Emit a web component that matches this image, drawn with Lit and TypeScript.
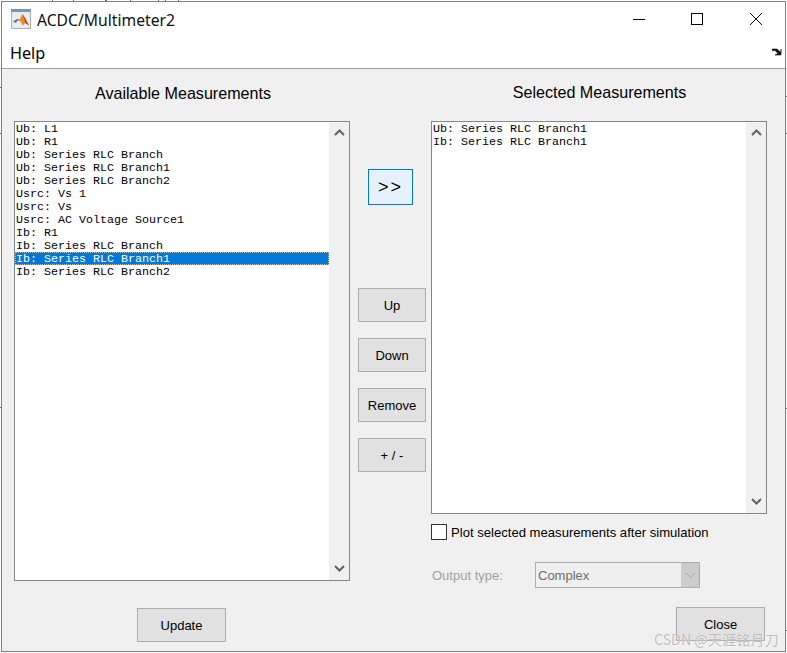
import { LitElement, html, css } from "lit";
import { customElement } from "lit/decorators.js";

const LEFT = ["Ub: L1","Ub: R1","Ub: Series RLC Branch","Ub: Series RLC Branch1","Ub: Series RLC Branch2","Usrc: Vs 1","Usrc: Vs","Usrc: AC Voltage Source1","Ib: R1","Ib: Series RLC Branch","Ib: Series RLC Branch1","Ib: Series RLC Branch2"];
const RIGHT = ["Ub: Series RLC Branch1","Ib: Series RLC Branch1"];
const SELECTED = 10;
/* Slivers of whatever lies behind the window, visible in the 1px margin round it. */
const BEHIND: [number, number][] = [[52,0],[73,0],[105,0],[106,0],[130,0],[158,0],[165,0],[178,0],[0,87],[0,133],[0,407],[786,96],[786,133],[786,408],[786,630]];

const chevron = (up: boolean) => html`<svg class="chev" width="11" height="7" viewBox="0 0 11 7"><path d=${up ? "M1 6L5.5 1.5L10 6" : "M1 1L5.5 5.5L10 1"} fill="none" stroke="#606060" stroke-width="2"/></svg>`;

@customElement("app-root")
export class AppRoot extends LitElement {
  static styles = css`
    :host { display: block; width: 787px; height: 653px; box-sizing: border-box; padding: 1px; background: #fff; font-family: "Liberation Sans", Arial, sans-serif; color: #000; position: relative; overflow: hidden; }
    .window { box-sizing: border-box; width: 785px; height: 651px; border: 1px solid #7f7f7f; display: flex; flex-direction: column; background: #f0f0f0; }
    .sliver { position: absolute; width: 1px; height: 1px; background: #666; }
    .titlebar { height: 34px; background: #fff; display: flex; align-items: center; padding: 0 0 0 9px; flex: none; }
    .logo { display: block; flex: none; }
    .title { font: 15.7px "Noto Sans", sans-serif; margin-left: 6px; flex: 1; color: #111; position: relative; top: 1px; }
    .ctl { width: 58px; height: 34px; display: flex; align-items: center; justify-content: center; }
    .ctl.gap { margin-right: 1px; }
    .ctls { display: flex; }
    .menubar { height: 32px; background: #fff; border-bottom: 1px solid #a0a0a0; display: flex; align-items: center; justify-content: space-between; padding: 0 3px 0 8px; flex: none; box-sizing: content-box; }
    .menu { font: 16.2px "Noto Sans", sans-serif; padding-top: 2px; }
    .content { flex: 1; display: grid; grid-template-columns: 336px 81px 336px; padding-left: 12px; min-height: 0; }
    .col { display: flex; flex-direction: column; min-width: 0; }
    h2 { margin: 0; height: 52px; box-sizing: border-box; font-weight: 400; font-size: 16.1px; display: flex; align-items: center; justify-content: center; padding: 0 0 3px 2px; }
    .col.right h2 { padding: 0 0 5px 1px; }
    .list { box-sizing: border-box; border: 1px solid #82878c; background: #fff; display: flex; min-height: 0; }
    .left .list { height: 460px; }
    .right .list { height: 393px; }
    .items { flex: 1; min-width: 0; font: 11.67px/15px "Liberation Mono", monospace; white-space: pre; }
    .item { height: 13px; padding-left: 1px; }
    .item.sel { background: #0078d7; color: #fff; outline: 1px dotted #d9b48a; outline-offset: -1px; }
    .bar { width: 20px; flex: none; background: #f0f0f0; display: flex; flex-direction: column; justify-content: space-between; align-items: center; padding: 7px 0 8px; box-sizing: border-box; }
    .chev { display: block; }
    .btn { box-sizing: border-box; border: 1px solid #adadad; background: #e1e1e1; display: flex; align-items: center; justify-content: center; font-size: 13px; color: #000; }
    .update { width: 89px; height: 34px; margin: 27px 0 0 123px; }
    .mid { display: flex; flex-direction: column; align-items: flex-start; padding: 100px 0 0 8px; }
    .add { width: 45px; height: 36px; margin-left: 10px; border-color: #0078d7; background: #e5f1fb; font-size: 18px; letter-spacing: 2px; }
    .stack { display: flex; flex-direction: column; gap: 16px; margin-top: 83px; }
    .stack .btn { width: 68px; height: 34px; }
    .check { display: flex; align-items: center; gap: 4px; margin-top: 10px; height: 16px; font-size: 13.1px; }
    .box { width: 16px; height: 16px; box-sizing: border-box; border: 1px solid #333; background: #fff; flex: none; }
    .output { display: flex; align-items: center; margin-top: 22px; height: 26px; color: #a0a0a0; font-size: 13px; }
    .out-label { width: 104px; padding-left: 1px; box-sizing: border-box; }
    .combo { box-sizing: border-box; width: 165px; height: 26px; border: 1px solid #adadad; background: #efefef; display: flex; align-items: center; justify-content: space-between; color: #6d6d6d; padding-left: 2px; }
    .combo-arrow { width: 18px; height: 24px; background: #cccccc; display: flex; align-items: center; justify-content: center; }
    .close { width: 89px; height: 34px; margin: 19px 0 0 245px; }
    .wm { position: absolute; left: 654px; top: 629px; font: 14.2px "Noto Sans CJK SC", sans-serif; color: rgba(150,150,150,.62); white-space: nowrap; text-shadow: 0 0 1px #fff; }
  `;

  list(items: string[], sel = -1) {
    return html`<div class="list">
      <div class="items">${items.map((t, i) => html`<div class="item ${i === sel ? "sel" : ""}">${t}</div>`)}</div>
      <div class="bar">${chevron(true)}${chevron(false)}</div>
    </div>`;
  }

  render() {
    return html`${BEHIND.map(([x, y]) => html`<i class="sliver" style="left:${x}px;top:${y}px"></i>`)}<div class="window">
      <div class="titlebar">
        <svg class="logo" width="20" height="20" viewBox="0 0 20 20">
          <rect x="0.5" y="0.5" width="19" height="19" fill="#e8edf1" stroke="#a3afba"/>
          <rect x="0" y="0" width="20" height="3" fill="#7d95ad"/>
          <path d="M2 12.5L6.5 10L8.5 10.5L11.5 5L14 9L18 16.5L14.5 14L11.8 16.5L9.5 12.5L6.5 11Z" fill="#ee8a24"/>
          <path d="M2 12.5L6.5 10L8.5 10.5L6.8 11.2L5 14Z" fill="#3f78b5"/>
          <path d="M11.5 5L14 9L18 16.5L14.5 14L12.8 9Z" fill="#cf3e1c"/>
        </svg>
        <div class="title">ACDC/Multimeter2</div>
        <div class="ctls">
          <div class="ctl"><svg width="12" height="12" viewBox="0 0 12 12"><path d="M0 6.5H12" stroke="#000" stroke-width="1"/></svg></div>
          <div class="ctl gap"><svg width="12" height="12" viewBox="0 0 12 12"><rect x="0.5" y="0.5" width="11" height="11" fill="none" stroke="#000"/></svg></div>
          <div class="ctl"><svg width="12" height="12" viewBox="0 0 12 12"><path d="M0 0L12 12M12 0L0 12" stroke="#000" stroke-width="1"/></svg></div>
        </div>
      </div>
      <div class="menubar">
        <div class="menu">Help</div>
        <svg width="10" height="8" viewBox="0 0 10 8"><path d="M0 1H5L9 4.5V1V7H3L6 5.5L3 2.5H0Z" fill="#111" stroke="#111" stroke-width="0.6"/></svg>
      </div>
      <div class="content">
        <div class="col left">
          <h2>Available Measurements</h2>
          ${this.list(LEFT, SELECTED)}
          <div class="btn update">Update</div>
        </div>
        <div class="mid">
          <div class="btn add">&gt;&gt;</div>
          <div class="stack">
            <div class="btn">Up</div>
            <div class="btn">Down</div>
            <div class="btn">Remove</div>
            <div class="btn">+ / -</div>
          </div>
        </div>
        <div class="col right">
          <h2>Selected Measurements</h2>
          ${this.list(RIGHT)}
          <div class="check"><span class="box"></span><span>Plot selected measurements after simulation</span></div>
          <div class="output">
            <span class="out-label">Output type:</span>
            <div class="combo"><span>Complex</span><span class="combo-arrow"><svg width="11" height="7" viewBox="0 0 11 7"><path d="M1 1L5.5 5.5L10 1" fill="none" stroke="#a8a8a8"/></svg></span></div>
          </div>
          <div class="btn close">Close</div>
        </div>
      </div>
    </div>
    <div class="wm">CSDN @天涯铭月刀</div>`;
  }
}
